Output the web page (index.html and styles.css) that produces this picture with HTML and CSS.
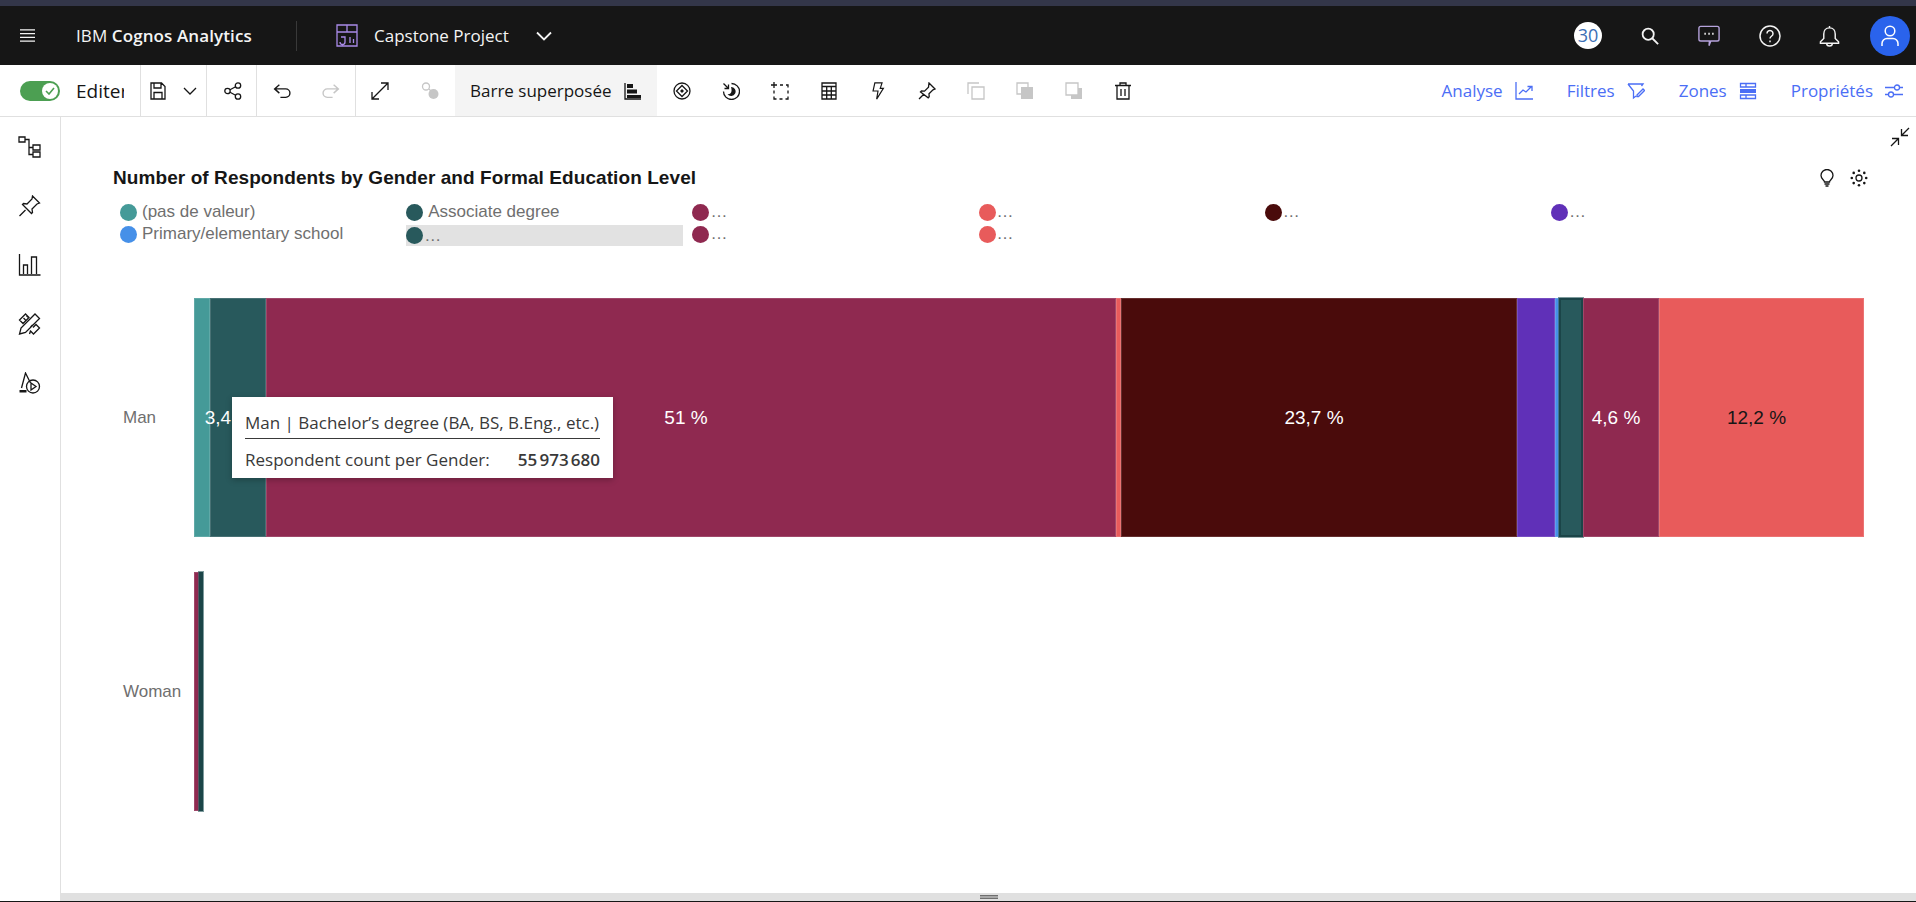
FILE: index.html
```html
<!DOCTYPE html>
<html lang="fr">

<head>
    <meta charset="UTF-8">
    <title>IBM Cognos Analytics</title>
    <link rel="stylesheet" href="styles.css">
</head>

<body>
    <div class="top-strip"></div>

    <header class="app-header">
        <button class="head-menu">
            <svg class="ico" viewBox="0 0 16 14"><path d="M0 1h16M0 5h16M0 9h16M0 13h16"/></svg>
        </button>
        <div class="brand">IBM <b>Cognos Analytics</b></div>
        <div class="head-sep"></div>
        <svg class="ico project-ico" viewBox="0 0 22 23">
            <path d="M1 1h20v21H1zM1 8h20M11 1v7M5 13h4v5a2.500 2.500 0 0 1-5 0M14 13v6M17.500 15v4"/>
        </svg>
        <div class="project-name">Capstone Project</div>
        <svg class="ico chevron-white" viewBox="0 0 16 10"><path d="M1 1.500l7 7 7-7"/></svg>

        <div class="head-right">
            <div class="badge">30</div>
            <svg class="ico head-ico search-ico" viewBox="0 0 20 20"><circle cx="8" cy="8" r="6.200"/><path d="M12.500 12.500l6.500 6.500"/></svg>
            <svg class="ico head-ico chat-ico" viewBox="0 0 24 23">
                <path d="M3 1h18a2 2 0 0 1 2 2v12a2 2 0 0 1-2 2h-7l-2 5 .5-5H3a2 2 0 0 1-2-2V3a2 2 0 0 1 2-2z"/>
                <path class="dots" d="M7 9h1.500M11.300 9h1.500M15.500 9h1.500"/>
            </svg>
            <svg class="ico head-ico" viewBox="0 0 22 22">
                <circle cx="11" cy="11" r="10"/>
                <path d="M8 8.500a3 3 0 1 1 4.700 2.500c-1 .7-1.700 1.300-1.700 2.500M11 15.500v1.800"/>
            </svg>
            <svg class="ico head-ico bell-ico" viewBox="0 0 22 23">
                <path d="M11 1v2M11 3c4 0 6 3 6 6.500V14l3.500 3.500v1.500h-19v-1.500L5 14V9.500C5 6 7 3 11 3zM8 19a3 3 0 0 0 6 0"/>
            </svg>
            <div class="avatar">
                <svg class="ico" viewBox="0 0 18 22"><circle cx="9" cy="6" r="4.800"/><path d="M1 21v-2.500a5 5 0 0 1 5-5h6a5 5 0 0 1 5 5V21"/></svg>
            </div>
        </div>
    </header>

    <div class="toolbar">
        <div class="tool-group edit-group">
            <div class="toggle">
                <div class="toggle-knob">
                    <svg class="ico" viewBox="0 0 10 8"><path d="M1 4l3 3 5-6"/></svg>
                </div>
            </div>
            <div class="edit-label">Editer</div>
        </div>
        <div class="tool-group save-group">
            <svg class="ico tb-ico" viewBox="0 0 16 18"><path d="M1 1h10.500L15 4.500V17H1zM4 1v5h7V1M4 17v-6.500h8V17"/></svg>
            <svg class="ico tb-chevron" viewBox="0 0 14 8"><path d="M1 1l6 6 6-6"/></svg>
        </div>
        <div class="tool-group share-group">
            <svg class="ico tb-ico" viewBox="0 0 18 18"><circle cx="14" cy="3.500" r="2.700"/><circle cx="3.500" cy="9" r="2.700"/><circle cx="14" cy="14.500" r="2.700"/><path d="M6 7.800l5.600-3M6 10.200l5.600 3"/></svg>
        </div>
        <div class="tool-group undo-group">
            <svg class="ico tb-ico" viewBox="0 0 17 14"><path d="M6 1L1.500 5 6 9M1.500 5H12a4 4 0 0 1 0 8H7"/></svg>
            <svg class="ico tb-ico off" viewBox="0 0 17 14"><path d="M11 1l4.500 4L11 9M15.500 5H5a4 4 0 0 0 0 8h5"/></svg>
        </div>
        <div class="tool-group expand-group">
            <svg class="ico tb-ico" viewBox="0 0 18 18"><path d="M1 17L17 1M10 1h7v7M1 10v7h7"/></svg>
            <svg class="ico tb-ico off" viewBox="0 0 18 18"><circle cx="5" cy="4.500" r="3.500"/><path d="M8 7l3 3"/><circle class="solid" cx="12.500" cy="12" r="5"/></svg>
        </div>
        <div class="chart-type">
            <span>Barre superposée</span>
            <svg class="ico tb-ico" viewBox="0 0 18 18"><path d="M1 1v16h16"/><path class="solid" d="M3 2h6v4H3zM3 7.500h10v4H3zM3 13h14v3H3z"/></svg>
        </div>
        <div class="icon-btn">
            <svg class="ico tb-ico" viewBox="0 0 18 18"><circle cx="9" cy="9" r="8"/><path d="M9 3.500L14.500 9 9 14.500 3.500 9z"/><path class="solid" d="M9 7l2 2-2 2-2-2z"/></svg>
        </div>
        <div class="icon-btn">
            <svg class="ico tb-ico" viewBox="0 0 18 18"><path d="M9.500 1.500a8 8 0 1 1-8 8"/><path d="M1.500 1.500l5 5M2.500 6.500h4v-4"/><path class="solid" d="M9 5a4.500 4.500 0 1 1-3.500 7.200C9 12.500 10.500 9.500 9 5z"/></svg>
        </div>
        <div class="icon-btn">
            <svg class="ico tb-ico" viewBox="0 0 18 18"><path d="M3 0v6M0 3h6M9 3h3M15 3h2v2.500M17 8.500v3M17 14.500V17h-2.500M11.500 17h-3M5.500 17H3v-2.500M3 11.500v-3"/></svg>
        </div>
        <div class="icon-btn">
            <svg class="ico tb-ico" viewBox="0 0 16 18"><path d="M1 1h14v16H1zM1 4.500h14M1 9h14M1 13h14M5.700 4.500V17M10.300 4.500V17"/></svg>
        </div>
        <div class="icon-btn">
            <svg class="ico tb-ico" viewBox="0 0 13 20"><path d="M3 1h8L9 7h3.500L5 19l1.500-9H1z"/></svg>
        </div>
        <div class="icon-btn">
            <svg class="ico tb-ico" viewBox="0 0 18 18"><path d="M1 17l5-5M11 1l6 6-2 .8-4 4 .2 3-1 1L2.500 10l1-1 3 .2 4-4z"/></svg>
        </div>
        <div class="icon-btn">
            <svg class="ico tb-ico off" viewBox="0 0 18 18"><path d="M12 1H1v11"/><path d="M5 5h12v12H5z"/></svg>
        </div>
        <div class="icon-btn">
            <svg class="ico tb-ico off" viewBox="0 0 18 18"><path d="M12 5V1H1v11h4"/><path class="solid" d="M5 5h12v12H5z"/></svg>
        </div>
        <div class="icon-btn">
            <svg class="ico tb-ico off" viewBox="0 0 18 18"><path class="solid" d="M6 13h7V6h4v11H6z"/><path d="M1 1h12v12H1z"/></svg>
        </div>
        <div class="icon-btn">
            <svg class="ico tb-ico" viewBox="0 0 16 18"><path d="M0 3.500h16M5 3V1h6v2M2 3.500V17h12V3.500M6 7v7M10 7v7"/></svg>
        </div>

        <div class="panel-tabs">
            <div class="panel-tab">
                <span>Analyse</span>
                <svg class="ico" viewBox="0 0 18 18"><path d="M1 0v17h17M4 12l4-4 3 2 5-5M12.500 4.500H17V9"/></svg>
            </div>
            <div class="panel-tab">
                <span>Filtres</span>
                <svg class="ico" viewBox="0 0 18 16"><path d="M1 1h15l-1.500 2M1 1l5.500 7v7l2.500-2M10 12l6-6 1.500 1.500-6 6H10z"/></svg>
            </div>
            <div class="panel-tab">
                <span>Zones</span>
                <svg class="ico" viewBox="0 0 18 17"><path d="M1.500 1h15v3.500h-15zM1.500 12.500h15V16h-15zM7 1v3.500M7 12.500V16"/><path class="solid" d="M1 6.500h16v4H1z"/></svg>
            </div>
            <div class="panel-tab">
                <span>Propriétés</span>
                <svg class="ico" viewBox="0 0 18 14"><circle cx="12" cy="3.500" r="2.500"/><circle cx="6" cy="10.500" r="2.500"/><path d="M0 3.500h9.500M14.500 3.500H18M0 10.500h3.500M8.500 10.500H18"/></svg>
            </div>
        </div>
    </div>

    <div class="workspace">
        <nav class="side-nav">
            <svg class="ico side-ico" viewBox="0 0 23 22"><path d="M1 1h6v5H1zM15 9h7v5h-7zM15 16h7v5h-7zM7 3.500h4V18.500h4M11 11.500h4"/></svg>
            <svg class="ico side-ico" viewBox="0 0 22 22"><path d="M1 21l6-6M14 1l7 7-2.500 1-5 5 .5 3.500-1 1L4 9.500l1-1 3.500.5 5-5z"/></svg>
            <svg class="ico side-ico" viewBox="0 0 22 22"><path d="M1 0v21h21M5 20v-9h4v9M13 20V3h5v17"/></svg>
            <svg class="ico side-ico" viewBox="0 0 22 22"><path d="M7 1L1 7l3.500 3.500 6-6zM14 12l-2 2M12 18l-1 3M14.500 14.500l3-3 3.500 3.500-6 6-3.500-3.500M5 5l2 2M8 2.800l1.500 1.500M16.500 1L21 5.500 7 19.500l-6 1.500 1.500-6z"/></svg>
            <svg class="ico side-ico" viewBox="0 0 22 22"><path d="M3 16L7 1l5 10"/><path class="solid" d="M1 18h7v2.500H1z"/><circle cx="14.500" cy="14.500" r="6.500"/><path d="M12.500 11l5 3.500-5 3.500z"/></svg>
        </nav>

        <main class="canvas">
            <div class="canvas-top">
                <svg class="ico collapse-ico" viewBox="0 0 20 20"><path d="M1 19l7-7M2 11.500h6.500V18M19 1l-7 7M18 8.500h-6.500V2"/></svg>
            </div>

            <div class="title-row">
                <h1 class="chart-title">Number of Respondents by Gender and Formal Education Level</h1>
                <div class="title-actions">
                    <svg class="ico" viewBox="0 0 14 18"><path d="M4.500 13c0-2-3.500-3-3.500-6.500a6 6 0 0 1 12 0C13 10 9.500 11 9.500 13zM4.500 15h5M5.500 17h3"/></svg>
                    <svg class="ico" viewBox="0 0 18 18"><circle cx="9" cy="9" r="3"/><circle class="solid" cx="9" cy="1.800" r="1.300"/><circle class="solid" cx="9" cy="16.200" r="1.300"/><circle class="solid" cx="1.800" cy="9" r="1.300"/><circle class="solid" cx="16.200" cy="9" r="1.300"/><circle class="solid" cx="3.700" cy="3.900" r="1.300"/><circle class="solid" cx="14.300" cy="3.900" r="1.300"/><circle class="solid" cx="3.700" cy="14.100" r="1.300"/><circle class="solid" cx="14.300" cy="14.100" r="1.300"/></svg>
                </div>
            </div>

            <div class="legend">
                <div class="legend-item"><i class="dot c-teal"></i>(pas de valeur)</div>
                <div class="legend-item"><i class="dot c-pine"></i>Associate degree</div>
                <div class="legend-item short"><i class="dot c-maroon"></i>…</div>
                <div class="legend-item short"><i class="dot c-red"></i>…</div>
                <div class="legend-item short"><i class="dot c-dark"></i>…</div>
                <div class="legend-item short"><i class="dot c-purple"></i>…</div>
                <div class="legend-item"><i class="dot c-blue"></i>Primary/elementary school</div>
                <div class="legend-item short active"><i class="dot c-pine"></i>…</div>
                <div class="legend-item short"><i class="dot c-maroon"></i>…</div>
                <div class="legend-item short"><i class="dot c-red"></i>…</div>
            </div>

            <div class="chart-row">
                <div class="row-label">Man</div>
                <div class="bar">
                    <div class="seg c-teal" style="width:16px"></div>
                    <div class="seg c-pine seg-clipped" style="width:56px">3,4 %</div>
                    <div class="seg c-maroon" style="width:850px">51 %</div>
                    <div class="seg c-red" style="width:5px"></div>
                    <div class="seg c-dark" style="width:396px">23,7 %</div>
                    <div class="seg c-purple" style="width:38px"></div>
                    <div class="seg c-blue" style="width:4px"></div>
                    <div class="seg c-pine selected" style="width:24px"></div>
                    <div class="seg c-maroon" style="width:76px">4,6 %</div>
                    <div class="seg c-red label-dark" style="width:205px">12,2 %</div>
                </div>
            </div>

            <div class="chart-row">
                <div class="row-label">Woman</div>
                <div class="bar">
                    <div class="seg c-maroon" style="width:5px"></div>
                    <div class="seg c-pine selected" style="width:4px"></div>
                </div>
            </div>

            <div class="tooltip">
                <div class="tooltip-title">Man | Bachelor’s degree (BA, BS, B.Eng., etc.)</div>
                <div class="tooltip-row">
                    <span>Respondent count per Gender:</span>
                    <b>55&#8239;973&#8239;680</b>
                </div>
            </div>

            <div class="resize-bar"><div class="resize-handle"></div></div>
        </main>
    </div>
</body>

</html>
```

FILE: styles.css
```css
* {
    box-sizing: border-box;
}

html,
body {
    height: 902px;
}

body {
    margin: 0;
    overflow: hidden;
    display: flex;
    flex-direction: column;
    background-color: #fff;
    color: #161616;
    font-family: "Open Sans", "Noto Sans", sans-serif;
    font-size: 17px;
}

.ico {
    display: block;
    flex: none;
    fill: none;
    stroke: currentColor;
    stroke-width: 1.3;
}

.ico .solid {
    fill: currentColor;
    stroke: none;
}

.top-strip {
    height: 6px;
    background-color: #333649;
}

/* header */
.app-header {
    height: 59px;
    display: flex;
    align-items: center;
    background-color: #161616;
    color: #f4f4f4;
}

.head-menu {
    width: 15px;
    height: 14px;
    margin-left: 20px;
    padding: 0;
    border: 0;
    background: none;
    color: #f4f4f4;
}

.brand {
    margin-left: 41px;
    width: 178px;
    font-size: 17px;
    letter-spacing: 0.1px;
    white-space: nowrap;
}

.brand b {
    font-weight: 600;
}

.head-sep {
    width: 1px;
    height: 30px;
    margin-left: 42px;
    background-color: #393939;
}

.project-ico {
    width: 22px;
    height: 23px;
    margin-left: 39px;
    color: #a98ae8;
}

.project-name {
    margin-left: 16px;
    width: 136px;
    white-space: nowrap;
}

.chevron-white {
    width: 16px;
    height: 10px;
    margin-left: 26px;
    stroke-width: 1.8;
}

.head-right {
    margin-left: auto;
    display: flex;
    align-items: center;
    padding-right: 6px;
}

.badge {
    width: 28px;
    height: 27px;
    border-radius: 50%;
    background-color: #fff;
    color: #3b6fb5;
    font-size: 18px;
    line-height: 27px;
    text-align: center;
}

.head-ico {
    width: 22px;
    height: 22px;
    margin-left: 39px;
    stroke-width: 1.5;
}

.search-ico {
    width: 18px;
    height: 18px;
    stroke-width: 2;
}

.chat-ico {
    color: #b6a3dc;
}

.chat-ico .dots {
    color: #fff;
    stroke-width: 2;
}

.bell-ico {
    width: 21px;
    margin-left: 38px;
}

.avatar {
    width: 40px;
    height: 40px;
    margin-left: 30px;
    border-radius: 50%;
    background-color: #2a63ec;
    display: flex;
    align-items: center;
    justify-content: center;
    color: #fff;
}

.avatar .ico {
    width: 18px;
    height: 22px;
    stroke-width: 1.5;
}

/* toolbar */
.toolbar {
    height: 52px;
    display: flex;
    align-items: stretch;
    border-bottom: 1px solid #e0e0e0;
}

.tool-group {
    display: flex;
    align-items: center;
    border-right: 1px solid #e0e0e0;
}

.tb-ico {
    width: 18px;
    height: 18px;
    color: #161616;
}

.tb-ico.off {
    color: #c6c6c6;
}

.edit-group {
    width: 141px;
    padding-left: 20px;
}

.toggle {
    width: 40px;
    height: 20px;
    border-radius: 10px;
    background-color: #4c9f52;
    display: flex;
    justify-content: flex-end;
    align-items: center;
    padding-right: 2px;
}

.toggle-knob {
    width: 16px;
    height: 16px;
    border-radius: 50%;
    background-color: #fff;
    color: #4c9f52;
    padding: 4px 3px;
}

.toggle-knob .ico {
    width: 10px;
    height: 8px;
    stroke-width: 1.6;
}

.edit-label {
    margin-left: 16px;
    width: 48px;
    overflow: hidden;
    font-size: 19px;
}

.save-group {
    width: 66px;
    padding-left: 8px;
}

.tb-chevron {
    width: 14px;
    height: 8px;
    margin-left: 16px;
    color: #161616;
}

.share-group {
    width: 50px;
    padding-left: 17px;
}

.undo-group {
    width: 99px;
    padding-left: 16px;
    gap: 31px;
}

.expand-group {
    width: 99px;
    padding-left: 15px;
    gap: 32px;
    border-right: 0;
}

.chart-type {
    width: 202px;
    padding-left: 15px;
    display: flex;
    align-items: center;
    gap: 12px;
    background-color: #f4f4f4;
    white-space: nowrap;
}

.icon-btn {
    width: 49px;
    display: flex;
    align-items: center;
    justify-content: center;
}

.panel-tabs {
    margin-left: auto;
    display: flex;
    align-items: center;
    gap: 34px;
    padding-right: 13px;
    color: #4b6ef5;
}

.panel-tab {
    display: flex;
    align-items: center;
    gap: 12px;
    white-space: nowrap;
}

.panel-tab .ico {
    width: 18px;
    height: 18px;
}

/* main area */
.workspace {
    flex: 1;
    display: flex;
    min-height: 0;
    border-bottom: 1px solid #161616;
}

.side-nav {
    width: 61px;
    flex: none;
    border-right: 1px solid #e0e0e0;
    padding: 19px 0 0 18px;
    display: flex;
    flex-direction: column;
    gap: 37px;
}

.side-ico {
    width: 23px;
    height: 22px;
    color: #161616;
}

.canvas {
    flex: 1;
    position: relative;
    min-width: 0;
    padding-left: 52px;
}

.canvas-top {
    height: 30px;
    padding: 10px 6px 0 0;
    display: flex;
    justify-content: flex-end;
}

.collapse-ico {
    width: 20px;
    height: 20px;
}

.title-row {
    margin-top: 19px;
    height: 24px;
    display: flex;
    align-items: center;
    justify-content: space-between;
    padding-right: 48px;
}

.chart-title {
    margin: 0;
    font-family: "Liberation Sans", Arial, sans-serif;
    font-size: 19px;
    font-weight: 700;
    letter-spacing: 0.08px;
    color: #161616;
}

.title-actions {
    display: flex;
    align-items: center;
    gap: 14px;
}

.title-actions .ico {
    width: 18px;
    height: 18px;
}

.legend {
    margin: 11px 0 0 7px;
    display: grid;
    grid-template-columns: repeat(6, 286.2px);
    grid-auto-rows: 22px;
    font-family: "Liberation Sans", Arial, sans-serif;
    font-size: 17px;
    color: #6f6f6f;
}

.legend-item {
    display: flex;
    align-items: center;
    gap: 5px;
    white-space: nowrap;
}

.legend-item.short {
    gap: 1px;
}

.legend-item.active {
    width: 277px;
    height: 21px;
    margin-top: 2px;
    background-color: #e2e2e2;
}

.dot {
    width: 17px;
    height: 17px;
    flex: none;
    border-radius: 50%;
}

.chart-row {
    height: 239px;
    margin-bottom: 35px;
    display: flex;
    align-items: center;
    font-family: "Liberation Sans", Arial, sans-serif;
}

.legend + .chart-row {
    margin-top: 53px;
}

.row-label {
    width: 81px;
    padding-left: 10px;
    font-size: 17px;
    color: #6f6f6f;
}

.bar {
    display: flex;
    height: 100%;
}

.seg {
    flex: none;
    display: flex;
    align-items: center;
    justify-content: center;
    border: 1px solid rgba(255, 255, 255, 0.15);
    color: #fff;
    font-size: 19px;
    white-space: nowrap;
}

.seg:not(:empty) {
    padding-right: 10px;
}

.seg.seg-clipped {
    padding-right: 18px;
}

.label-dark {
    color: #161616;
}

.selected {
    border: 2px solid #1b4548;
    outline: 1px solid rgba(40, 89, 92, 0.6);
}

.c-teal {
    background-color: #459a98;
}

.c-pine {
    background-color: #28595c;
}

.c-maroon {
    background-color: #8f2950;
}

.c-red {
    background-color: #e85b5b;
}

.c-dark {
    background-color: #4a0b0b;
}

.c-purple {
    background-color: #6030b8;
}

.c-blue {
    background-color: #4690e8;
}

.tooltip {
    position: absolute;
    left: 171px;
    top: 280px;
    width: 381px;
    height: 81px;
    padding: 14px 13px 0;
    background-color: #fff;
    color: #393939;
    box-shadow: 0 2px 6px rgba(0, 0, 0, 0.25);
}

.tooltip-title {
    height: 28px;
    border-bottom: 1px solid #393939;
    white-space: nowrap;
}

.tooltip-row {
    margin-top: 9px;
    display: flex;
    justify-content: space-between;
    white-space: nowrap;
}

.tooltip-row b {
    font-weight: 600;
}

.resize-bar {
    position: absolute;
    left: 0;
    right: 0;
    bottom: 0;
    height: 8px;
    background-color: #e0e0e0;
    display: flex;
    justify-content: center;
    align-items: center;
}

.resize-handle {
    width: 18px;
    height: 4px;
    border-top: 1px solid #6f6f6f;
    border-bottom: 1px solid #6f6f6f;
    background-color: #a8a8a8;
}
```
